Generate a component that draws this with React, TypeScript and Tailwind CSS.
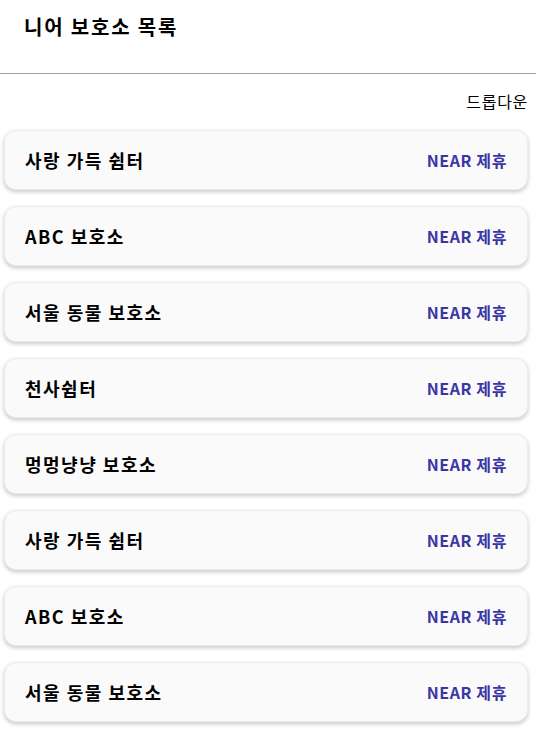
const shelters = [
  "사랑 가득 쉼터",
  "ABC 보호소",
  "서울 동물 보호소",
  "천사쉼터",
  "멍멍냥냥 보호소",
  "사랑 가득 쉼터",
  "ABC 보호소",
  "서울 동물 보호소",
];

function ShelterCard({ name }: { name: string }) {
  return (
    <div className="flex items-center justify-between h-[60px] px-5 rounded-xl bg-[#fafafa] border border-[#ececec] shadow-[0_2px_4px_rgba(0,0,0,0.22)]">
      <span className="text-[18px] font-bold tracking-[1.5px] text-black">{name}</span>
      <span className="text-[16px] font-semibold tracking-[0.6px] text-[#3a35a6]">NEAR 제휴</span>
    </div>
  );
}

export default function App() {
  return (
    <div className="min-h-[729px] bg-white text-black font-['Noto_Sans_CJK_KR','Noto_Sans',sans-serif]">
      {/* Header */}
      <div className="h-[74px] border-b border-[#a0a0a0] px-6 pt-[12px]">
        <h1 className="text-[20px] leading-[30px] font-bold tracking-[1.8px]">니어 보호소 목록</h1>
      </div>

      {/* Dropdown */}
      <div className="flex justify-end pr-2 mt-4 h-[22px] text-[16px] leading-[22px] tracking-[0.7px]">
        드롭다운
      </div>

      {/* List */}
      <div className="flex flex-col gap-4 pl-1 pr-2 mt-[18px] pb-2">
        {shelters.map((s, i) => (
          <ShelterCard key={i} name={s} />
        ))}
      </div>
    </div>
  );
}
